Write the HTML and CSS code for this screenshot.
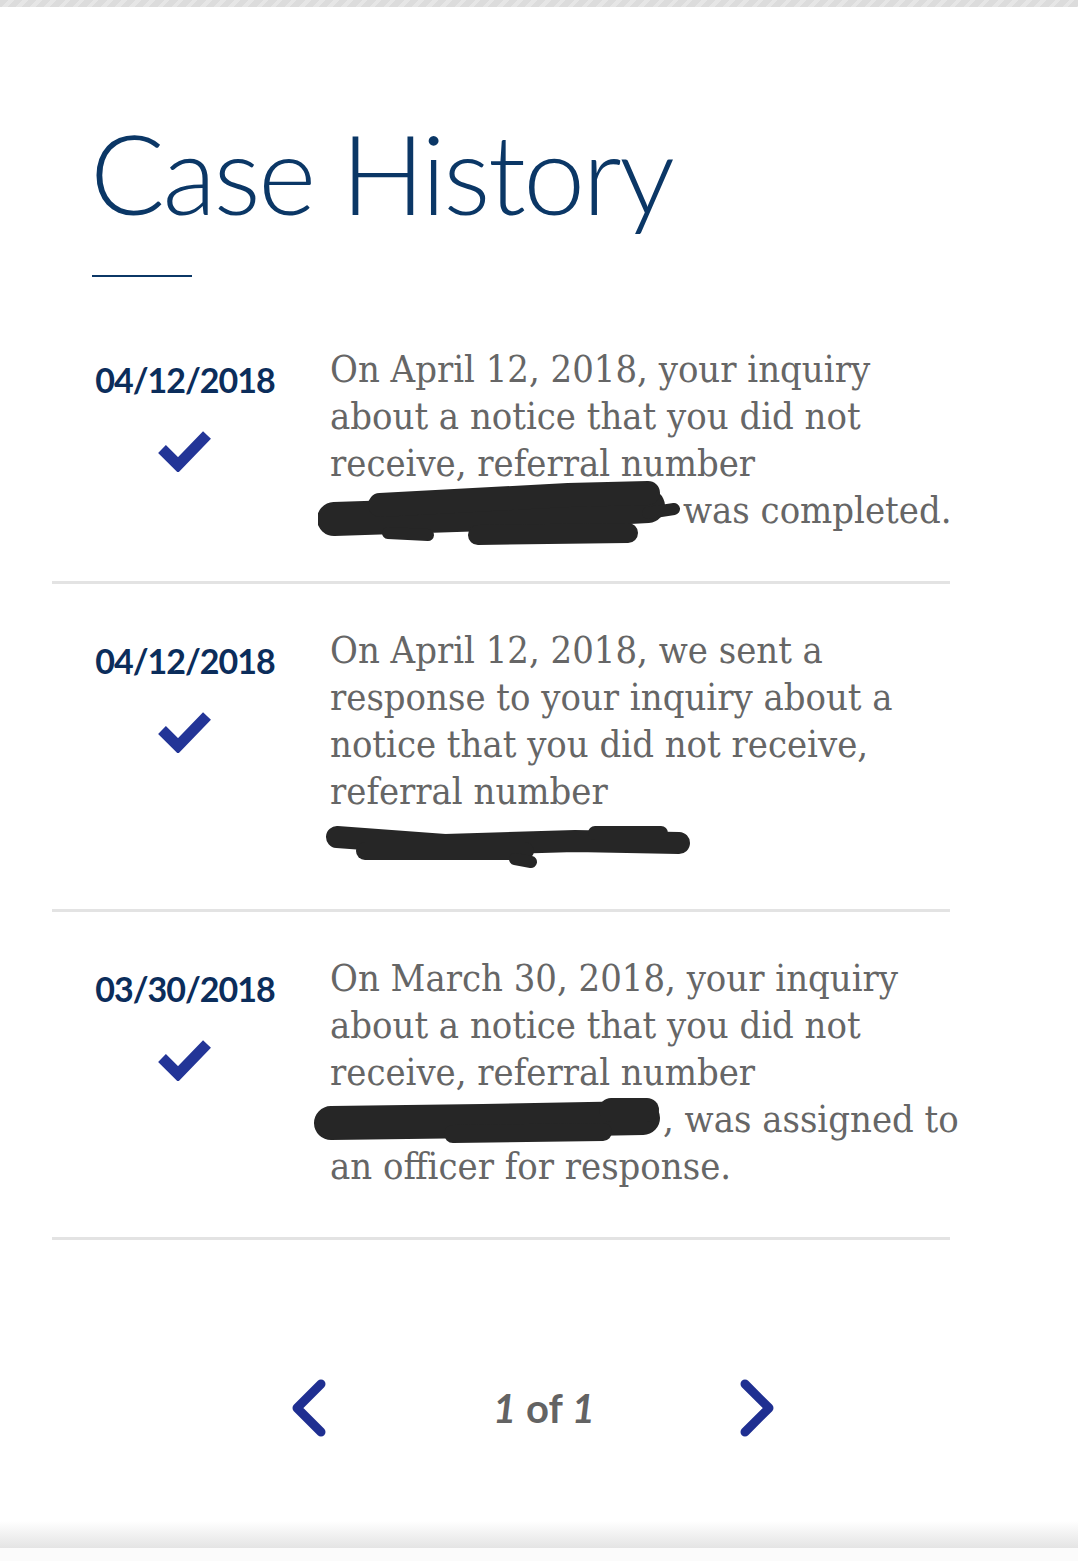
FILE: index.html
```html
<!DOCTYPE html>
<html lang="en">
<head>
<meta charset="utf-8">
<title>Case History</title>
<link rel="stylesheet" href="styles.css">
</head>
<body>
<div class="topstrip"></div>
<main class="page">
  <h1 class="title">Case History</h1>
  <div class="title-rule"></div>

  <section class="history">
    <article class="row">
      <div class="date-col">
        <div class="date">04/12/2018</div>
        <svg class="check" viewBox="0 0 56 44" width="56" height="44"><polyline points="5,21 21,37 50,7" fill="none" stroke="#233597" stroke-width="11" stroke-linejoin="miter"/></svg>
      </div>
      <p class="text">On April 12, 2018, your inquiry<br>about a notice that you did not<br>receive, referral number<br><span class="redact r1"><svg viewBox="0 0 365 80" width="365" height="80"><g fill="none" stroke="#262626" stroke-linecap="round"><path d="M16 46 L 200 40 L 330 33" stroke-width="34"/><path d="M62 32 L 250 22 L 330 20" stroke-width="24"/><path d="M160 62 L 310 60" stroke-width="20"/><path d="M70 60 L 110 62" stroke-width="12"/><path d="M330 40 L 356 36" stroke-width="12"/></g></svg></span>was completed.</p>
    </article>

    <article class="row">
      <div class="date-col">
        <div class="date">04/12/2018</div>
        <svg class="check" viewBox="0 0 56 44" width="56" height="44"><polyline points="5,21 21,37 50,7" fill="none" stroke="#233597" stroke-width="11" stroke-linejoin="miter"/></svg>
      </div>
      <p class="text">On April 12, 2018, we sent a<br>response to your inquiry about a<br>notice that you did not receive,<br>referral number<br><span class="redact r2"><svg viewBox="0 0 365 80" width="365" height="80"><g fill="none" stroke="#262626" stroke-linecap="round"><path d="M12 36 L 120 44 L 250 40 L 354 42" stroke-width="22"/><path d="M40 50 L 200 50" stroke-width="18"/><path d="M190 58 L 206 61" stroke-width="12"/><path d="M270 32 L 336 32" stroke-width="14"/></g></svg></span></p>
    </article>

    <article class="row">
      <div class="date-col">
        <div class="date">03/30/2018</div>
        <svg class="check" viewBox="0 0 56 44" width="56" height="44"><polyline points="5,21 21,37 50,7" fill="none" stroke="#233597" stroke-width="11" stroke-linejoin="miter"/></svg>
      </div>
      <p class="text">On March 30, 2018, your inquiry<br>about a notice that you did not<br>receive, referral number<br><span class="redact r3"><svg viewBox="0 0 350 80" width="350" height="80"><g fill="none" stroke="#262626" stroke-linecap="round"><path d="M18 41 L 170 39 L 330 36" stroke-width="34"/><path d="M140 52 L 290 50" stroke-width="18"/><path d="M298 28 L 334 28" stroke-width="24"/></g></svg></span>, was assigned to<br>an officer for response.</p>
    </article>
  </section>

  <nav class="pager">
    <svg class="chev" viewBox="0 0 44 60" width="44" height="60"><polyline points="34,6 10,30 34,54" fill="none" stroke="#1f2f91" stroke-width="9" stroke-linecap="round" stroke-linejoin="round"/></svg>
    <span class="count"><em>1</em> of <em>1</em></span>
    <svg class="chev" viewBox="0 0 44 60" width="44" height="60"><polyline points="10,6 34,30 10,54" fill="none" stroke="#1f2f91" stroke-width="9" stroke-linecap="round" stroke-linejoin="round"/></svg>
  </nav>
</main>
<div class="bottom-shade"></div>
<div class="bottom-band"></div>
</body>
</html>
```

FILE: styles.css
```css
html, body {
  margin: 0;
  padding: 0;
  background: #ffffff;
}

.topstrip {
  height: 7px;
  background: repeating-linear-gradient(135deg, #dcdcdc 0 6px, #e6e6e6 6px 10px);
}

.page {
  padding: 0 128px 0 52px;
}

.title {
  margin: 95px 0 0 38px;
  font-family: Lato, "Open Sans", sans-serif;
  font-weight: 300;
  font-size: 111px;
  line-height: 140px;
  color: #0b3766;
  letter-spacing: -2.6px;
}

.title-rule {
  width: 100px;
  height: 2px;
  background: #0b3766;
  margin: 33px 0 0 40px;
}

.history {
  margin-top: 69px;
}

.row {
  display: grid;
  grid-template-columns: 235px 1fr;
  padding: 43px 0 47px 43px;
  border-bottom: 3px solid #e3e3e3;
}

.row:first-child {
  padding-top: 0;
}

.date-col {
  display: flex;
  flex-direction: column;
  align-items: center;
  width: 180px;
}

.date {
  font-family: Lato, "Open Sans", sans-serif;
  font-weight: 700;
  font-size: 34px;
  line-height: 44px;
  color: #0b2d5b;
  letter-spacing: -1px;
  padding-top: 12px;
}

.check {
  display: block;
  margin-top: 26px;
}

.text {
  margin: 0;
  font-family: "DejaVu Serif Condensed", "DejaVu Serif", serif;
  font-stretch: condensed;
  font-size: 37.8px;
  line-height: 47px;
  color: #666666;
  white-space: nowrap;
}

.redact {
  display: inline-block;
  position: relative;
  height: 30px;
  vertical-align: middle;
}

.redact svg {
  position: absolute;
  left: 0;
  top: -26px;
}

.r1 { width: 365px; margin-left: -12px; }
.r2 { width: 365px; margin-left: -5px; }
.r3 { width: 350px; margin-left: -17px; }

.pager {
  display: flex;
  align-items: center;
  height: 60px;
  margin-top: 138px;
  padding-left: 235px;
}

.count {
  margin: 0 140px 0 162px;
  font-family: Lato, "Open Sans", sans-serif;
  font-weight: 700;
  font-size: 40px;
  color: #636363;
}

.count em {
  font-style: italic;
}

.bottom-shade {
  height: 27px;
  margin-top: 83px;
  background: linear-gradient(to bottom, #ffffff, #e4e4e4);
}

.bottom-band {
  height: 20px;
  background: #fbfbfb;
}
```
